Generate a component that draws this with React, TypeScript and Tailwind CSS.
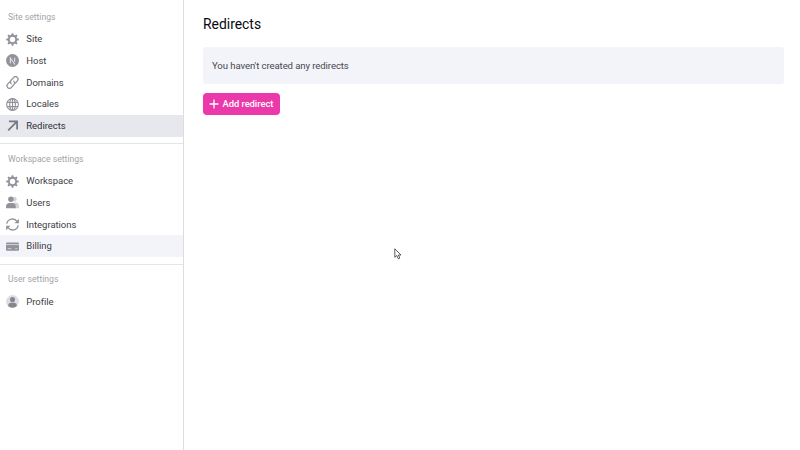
import type { ReactNode } from "react";

const gearTeeth = [0, 45, 90, 135, 180, 225, 270, 315];

function GearIcon() {
  return (
    <svg viewBox="0 0 24 24" className="size-[13px]">
      <circle cx="12" cy="12" r="6.8" fill="none" stroke="currentColor" strokeWidth="3.6" />
      {gearTeeth.map((angle) => (
        <path key={angle} d="M9.500 4.500 10.600.3h2.800L14.500 4.500z" fill="currentColor" transform={`rotate(${angle} 12 12)`} />
      ))}
    </svg>
  );
}

function HostIcon() {
  return (
    <svg viewBox="0 0 24 24" className="size-[13px]">
      <circle cx="12" cy="12" r="12" fill="currentColor" />
      <path d="M8 17V7.5l8.6 11.8M16 7v7.5" fill="none" stroke="#e9e9ed" strokeWidth="1.9" />
    </svg>
  );
}

function LinkIcon() {
  return (
    <svg viewBox="0 0 24 24" className="size-[13px]" fill="none" stroke="currentColor" strokeWidth="2.4" strokeLinecap="round">
      <path d="M9.8 14.6a5 5 0 0 1-.3-6.8l4.4-4.9a4.6 4.6 0 0 1 7 6.2l-3.6 4" />
      <path d="M14.2 9.4a5 5 0 0 1 .3 6.8l-4.4 4.9a4.6 4.6 0 0 1-7-6.2l3.6-4" />
    </svg>
  );
}

function GlobeIcon() {
  return (
    <svg viewBox="0 0 24 24" className="size-[13px]" fill="none" stroke="currentColor" strokeWidth="2.1">
      <circle cx="12" cy="12" r="10.8" />
      <ellipse cx="12" cy="12" rx="5.2" ry="10.8" />
      <path d="M12 1v22M2 8h20M2 16h20" />
    </svg>
  );
}

function ArrowIcon() {
  return (
    <svg viewBox="0 0 24 24" className="size-[13px] text-[#77777f]" fill="none" stroke="currentColor" strokeWidth="3.200">
      <path d="M5.500 4.500h15v15M20 5 4 21" />
    </svg>
  );
}

function UsersIcon() {
  return (
    <svg viewBox="0 0 24 24" className="size-[13px]" fill="currentColor">
      <g opacity=".4">
        <circle cx="15.500" cy="5.800" r="4.200" />
        <path d="M14 12h4c4 0 6 3 6 6v4.500H14z" />
      </g>
      <circle cx="9" cy="6" r="5" />
      <path d="M0 22.500v-3c0-4 3-6.500 6-6.500h6c3.500 0 6 2.500 6 6.500v3z" />
    </svg>
  );
}

function RefreshIcon() {
  return (
    <svg viewBox="0 0 24 24" className="size-[13px]">
      <g fill="none" stroke="currentColor" strokeWidth="2.500">
        <path d="M1.500 10.500A10.500 10.500 0 0 1 20.500 6.500" />
        <path d="M22.500 13.500A10.500 10.500 0 0 1 3.500 17.500" />
      </g>
      <path d="M23.800 1.500v8h-8zM.2 22.500v-8h8z" fill="currentColor" />
    </svg>
  );
}

function CardIcon() {
  return (
    <svg viewBox="0 0 24 24" className="size-[13px]">
      <rect y="4.500" width="24" height="15.500" rx="2" fill="currentColor" />
      <path d="M0 8.500h24" stroke="#d4d4dc" strokeWidth="1.800" />
      <path d="M3 16h7M17 16h4" stroke="#e0e0e7" strokeWidth="1.500" />
    </svg>
  );
}

function ProfileIcon() {
  return (
    <svg viewBox="0 0 24 24" className="size-[13px]">
      <circle cx="12" cy="12" r="12" fill="#dedee3" />
      <circle cx="12" cy="8.500" r="4.700" fill="#85858d" />
      <path d="M4 20.500c0-4 2.500-6 5-6h6c2.500 0 5 2 5 6-4.500 4-11.500 4-16 0z" fill="#85858d" />
    </svg>
  );
}

type Item = { label: string; icon: ReactNode; state?: "active" | "hover" };

const sections: { title: string; items: Item[] }[] = [
  {
    title: "Site settings",
    items: [
      { label: "Site", icon: <GearIcon /> },
      { label: "Host", icon: <HostIcon /> },
      { label: "Domains", icon: <LinkIcon /> },
      { label: "Locales", icon: <GlobeIcon /> },
      { label: "Redirects", icon: <ArrowIcon />, state: "active" },
    ],
  },
  {
    title: "Workspace settings",
    items: [
      { label: "Workspace", icon: <GearIcon /> },
      { label: "Users", icon: <UsersIcon /> },
      { label: "Integrations", icon: <RefreshIcon /> },
      { label: "Billing", icon: <CardIcon />, state: "hover" },
    ],
  },
  { title: "User settings", items: [{ label: "Profile", icon: <ProfileIcon /> }] },
];

function NavItem({ label, icon, state }: Item) {
  const look =
    state === "active" ? "bg-[#e7e7ee] text-[#303038]" : state === "hover" ? "bg-[#f3f4fa] text-[#404047]" : "text-[#404047]";
  return (
    <a className={`flex h-[21.65px] items-center gap-[7.3px] pl-1.5 text-[9.500px] tracking-[-0.04px] ${look}`}>
      <span className="flex text-[#92929a]">{icon}</span>
      <span className="pt-[0.400px]">{label}</span>
    </a>
  );
}

export default function App() {
  return (
    <div className="flex h-[450px] w-[800px] overflow-hidden bg-white font-['Roboto',sans-serif]">
      <aside className="w-[184px] shrink-0 border-r border-[#dddde0]">
        {sections.map((section, index) => (
          <section key={section.title} className={index > 0 ? "mt-[6.500px] border-t border-[#e5e5e8]" : "pt-[2.200px]"}>
            <h2 className="flex h-[26.300px] items-center pt-[4px] pl-2 text-[8.600px] text-[#a3a3aa]">{section.title}</h2>
            <nav>
              {section.items.map((item) => (
                <NavItem key={item.label} {...item} />
              ))}
            </nav>
          </section>
        ))}
      </aside>
      <main className="relative flex-1 pt-[14px] pr-4 pl-[19px]">
        <h1 className="pt-px text-[13.900px] leading-[19px] text-[#08080f]">Redirects</h1>
        <div className="mt-[13px] flex h-[37px] items-center rounded-[3px] bg-[#f3f4fa] pt-px pl-[9px] text-[9.600px] tracking-[-0.1px] text-[#48484f]">
          You haven't created any redirects
        </div>
        <button className="mt-[9px] flex h-[22px] w-[77px] items-center gap-[4px] rounded-[4px] bg-[#eb38aa] pl-[5.500px] text-[9.400px] font-medium tracking-[-0.04px] whitespace-nowrap text-white">
          <svg viewBox="0 0 10 10" className="size-[10px] shrink-0" stroke="currentColor" strokeWidth="1.3">
            <path d="M5 .5v9M.5 5h9" />
          </svg>
          Add redirect
        </button>
        <svg viewBox="0 0 8 12" className="absolute top-[248px] left-[210px] h-3 w-2">
          <path d="M.8.8v8.500l2-1.800 1.500 3.300 1.500-.7-1.400-3.100H7z" fill="white" stroke="#33333a" strokeWidth=".8" />
        </svg>
      </main>
    </div>
  );
}
